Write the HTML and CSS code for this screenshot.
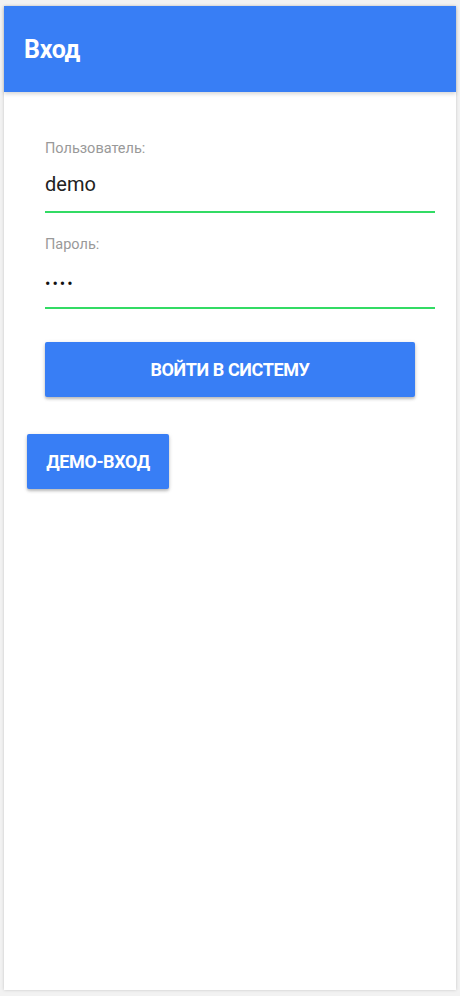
FILE: index.html
```html
<!DOCTYPE html>
<html lang="ru">
<head>
  <meta charset="UTF-8">
  <meta name="viewport" content="width=device-width, initial-scale=1.0">
  <title>Вход</title>
  <link rel="stylesheet" href="styles.css">
</head>
<body>
  <div class="page">
    <header class="toolbar">
      <h1 class="toolbar__title">Вход</h1>
    </header>
    <div class="content">
      <form class="login" id="login">
        <div class="field">
          <label class="field__label" for="username">Пользователь:</label>
          <input id="username" class="field__input" type="text" name="username" value="demo">
        </div>
        <div class="field">
          <label class="field__label" for="password">Пароль:</label>
          <input id="password" class="field__input field__input--pass" type="password" name="password" value="demo">
        </div>
        <button class="button button--block" type="submit">Войти в систему</button>
      </form>
      <button class="button button--demo" type="button">Демо-вход</button>
    </div>
  </div>
</body>
</html>
```

FILE: styles.css
```css
* {
  box-sizing: border-box;
}

body {
  margin: 0;
  background-color: #f2f2f2;
  font-family: Roboto, "Noto Sans", sans-serif;
}

.page {
  margin: 6px 4px;
  min-height: calc(100vh - 12px);
  background-color: #fff;
  box-shadow: 0 0 3px rgba(0, 0, 0, 0.18);
}

.toolbar {
  height: 86px;
  background-color: #387ef5;
  display: flex;
  align-items: center;
  padding-left: 20px;
  box-shadow: 0 2px 4px rgba(0, 0, 0, 0.16);
}

.toolbar__title {
  margin: 0;
  color: #fff;
  font-size: 25px;
  font-weight: 700;
  letter-spacing: -0.3px;
}

.content {
  padding: 25px 21px 0 23px;
}

.login {
  padding-left: 18px;
  display: flex;
  flex-direction: column;
}

.field {
  padding-top: 22px;
  padding-bottom: 7px;
  border-bottom: 2px solid #32db64;
  display: flex;
  flex-direction: column;
}

.field__label {
  height: 20px;
  line-height: 20px;
  font-size: 14.5px;
  color: #999;
}

.field__input {
  margin-top: 5px;
  height: 40px;
  border: none;
  outline: none;
  padding: 0;
  font-family: inherit;
  font-size: 20px;
  color: #222;
  background: transparent;
}

.field__input--pass {
  padding-top: 6px;
  font-size: 16px;
  letter-spacing: 2px;
  color: #111;
}

.button {
  height: 55px;
  border: none;
  border-radius: 2px;
  background-color: #387ef5;
  color: #fff;
  font-family: inherit;
  font-size: 18px;
  font-weight: 700;
  text-transform: uppercase;
  letter-spacing: -0.4px;
  cursor: pointer;
  box-shadow: 0 2px 3px rgba(0, 0, 0, 0.22), 0 1px 5px rgba(0, 0, 0, 0.1);
}

.button--block {
  margin-top: 33px;
  margin-right: 20px;
}

.button--demo {
  margin-top: 37px;
  width: 142px;
}
```
